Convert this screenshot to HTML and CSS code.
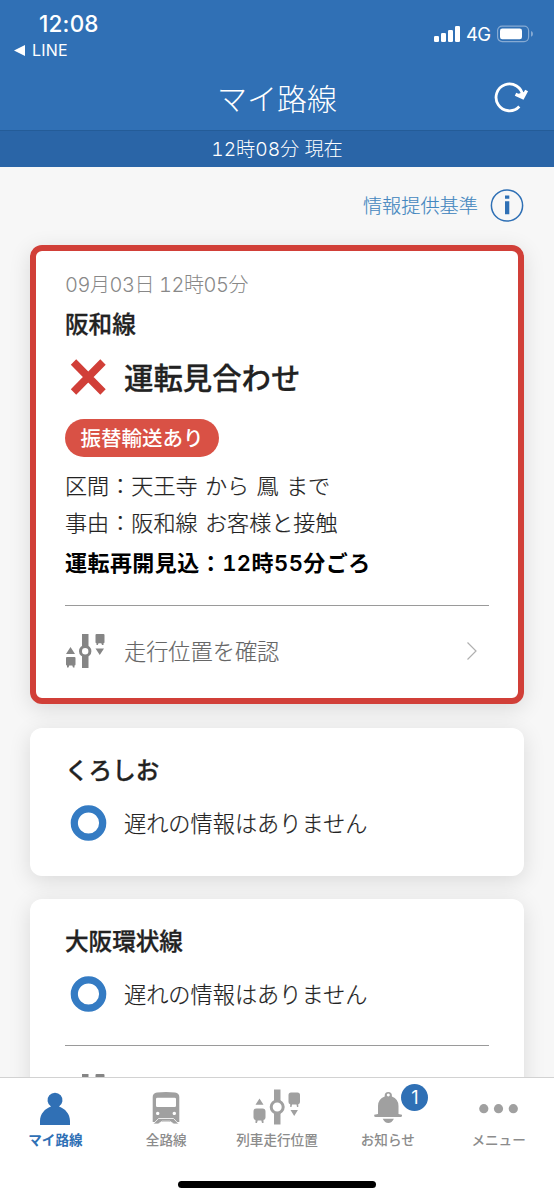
FILE: index.html
```
<!DOCTYPE html>
<html lang="ja">
<head>
<meta charset="utf-8">
<title>マイ路線</title>
<link rel="stylesheet" href="styles.css">
</head>
<body>
<svg class="defs" width="0" height="0">
  <symbol id="position" viewBox="0 0 40 34">
    <path d="M17 0h6.500v34H17z"/>
    <circle class="hub" cx="20.200" cy="17.200" r="4.700"/>
    <path d="M5.500 13l4.500 7H1zM30.500 14.500h8.500l-4.250 6.500z"/>
    <path d="M2 23h7.500q1 0 1 1v6.500q0 1-1 1v2H8l-.7-2H4.200l-.7 2H2v-2q-1 0-1-1V24q0-1 1-1zM31.500 0h7q1 0 1 1v7.300q0 1-1 1V11H37l-.7-1.700h-2.800L32.800 11h-1.300V9.300q-1 0-1-1V1q0-1 1-1z"/>
  </symbol>
</svg>
<header class="header">
  <div class="status-bar">
    <div class="clock-group">
      <div class="clock">12:08</div>
      <div class="back"><svg width="11" height="11" viewBox="0 0 11 11"><path d="M0 5.500L11 0v11z" fill="#fff"/></svg><span>LINE</span></div>
    </div>
    <div class="signal-group">
      <svg width="27" height="17" viewBox="0 0 27 17" fill="#fff"><rect x="0" y="10" width="5" height="6" rx="1.300"/><rect x="7" y="7" width="5" height="9" rx="1.300"/><rect x="14" y="4" width="5" height="12" rx="1.300"/><rect x="21" y="0" width="5" height="16" rx="1.300"/></svg>
      <span class="network">4G</span>
      <svg width="37" height="18" viewBox="0 0 37 18"><rect x=".6" y="1.100" width="31" height="15.500" rx="4.500" fill="none" stroke="#86aad3" stroke-width="1.200"/><rect x="3" y="3.500" width="22" height="10.700" rx="2.300" fill="#fff"/><path d="M34 6q2 .8 2 2.900T34 11.800z" fill="#86aad3"/></svg>
    </div>
  </div>
  <div class="nav-bar">
    <h1 class="title">マイ路線</h1>
    <svg class="reload" width="36" height="34" viewBox="0 0 36 34" fill="none" stroke="#fff" stroke-width="2.800"><path d="M26.300 26.500A13.400 13.400 0 1 1 29.800 16"/><path d="M22.500 14.200L29.800 17.500 33.600 10.500" stroke-width="3.300"/><path d="M25.500 14.300l4.300 2.200 2.300-4.300z" fill="#fff" stroke-width="1"/></svg>
  </div>
</header>
<div class="updated">12時08分 現在</div>
<main class="content">
  <div class="criteria"><span>情報提供基準</span>
    <svg width="34" height="34" viewBox="0 0 34 34"><circle cx="17" cy="16.500" r="15.600" fill="none" stroke="#2f70b5" stroke-width="1.500"/><path d="M15 6.500h4.300v3.300H15zM15 12.300h4.300v13H15z" fill="#2f70b5"/></svg>
  </div>
  <section class="card alert">
    <div class="date">09月03日 12時05分</div>
    <h2 class="line-name">阪和線</h2>
    <div class="state suspended">
      <svg width="46" height="36" viewBox="0 0 46 36"><path d="M8.500 3l29.500 30M38 3L8.500 33" stroke="#d13f38" stroke-width="7.600"/></svg>
      <span>運転見合わせ</span>
    </div>
    <div class="pill">振替輸送あり</div>
    <div class="detail">区間：天王寺 から 鳳 まで</div>
    <div class="detail">事由：阪和線 お客様と接触</div>
    <div class="resume">運転再開見込：12時55分ごろ</div>
    <div class="position-link">
      <svg class="position-icon" width="40" height="34"><use href="#position"/></svg>
      <span>走行位置を確認</span>
      <svg class="chevron" width="12" height="20" viewBox="0 0 12 20"><path d="M1.500 1.500l8.500 8.500-8.500 8.500" fill="none" stroke="#b0b0b0" stroke-width="1.200"/></svg>
    </div>
  </section>
  <section class="card">
    <h2 class="line-name">くろしお</h2>
    <div class="state">
      <svg width="46" height="36" viewBox="0 0 46 36"><circle cx="23.500" cy="18" r="14.200" fill="none" stroke="#347bc3" stroke-width="7.200"/></svg>
      <span>遅れの情報はありません</span>
    </div>
  </section>
  <section class="card">
    <h2 class="line-name">大阪環状線</h2>
    <div class="state">
      <svg width="46" height="36" viewBox="0 0 46 36"><circle cx="23.500" cy="18" r="14.200" fill="none" stroke="#347bc3" stroke-width="7.200"/></svg>
      <span>遅れの情報はありません</span>
    </div>
    <div class="position-link">
      <svg class="position-icon" width="40" height="34"><use href="#position"/></svg>
    </div>
  </section>
</main>
<nav class="tab-bar">
  <div class="tabs">
    <div class="tab active">
      <svg width="50" height="40" viewBox="0 0 50 40"><path d="M10 37V33C10 26 15 20.500 21 18.500A7.500 7.500 0 1 1 29 18.500C35 20.500 40 26 40 33V37z"/></svg>
      <span>マイ路線</span>
    </div>
    <div class="tab">
      <svg width="50" height="40" viewBox="0 0 50 40"><path fill-rule="evenodd" d="M16 4.500Q25 3.500 34 4.500Q38.300 5 38.300 9V34H11.700V9Q11.700 5 16 4.500zM15 11q0-1.300 1.300-1.300H33.700Q35 9.700 35 11v6.700q0 1.300-1.300 1.300H16.300Q15 19 15 17.700zM16.700 23.700a1.700 1.700 0 1 0 .01 0zM33.300 23.700a1.700 1.700 0 1 0 .01 0z"/><path d="M17.500 30.500h15l5.300 5.500h-5l-4-2.800h-7.600l-4 2.800h-5z" stroke="#fff" stroke-width=".8"/></svg>
      <span>全路線</span>
    </div>
    <div class="tab">
      <svg width="50" height="40" viewBox="0 0 50 40"><path d="M22 1.500h6.500v35H22z"/><circle class="hub" cx="25.200" cy="19" r="6"/><path d="M7.500 10.500l4 6.200h-8zM38.500 22h7.400l-3.700 6z"/><path d="M4.500 20.500h6q3 0 3 3v6q0 2-2 2.500V35h-1.500l-.7-2.500H5.700L5 35H3.500v-3q-2-.5-2-2.500v-6q0-3 3-3zM39 4.500h6.500q2.500 0 2.500 2.500v7q0 1.800-1.700 2.300V19H45l-.5-2.500h-4.500l-.5 2.500h-1.300v-2.700q-1.700-.5-1.700-2.300V7q0-2.500 2.500-2.500z"/></svg>
      <span>列車走行位置</span>
    </div>
    <div class="tab">
      <svg width="50" height="40" viewBox="0 0 50 40"><path fill-rule="evenodd" d="M21.700 8.500V7.500a3.600 3.600 0 1 1 7.200 0V8.500Q35.500 11 35.500 18v8l3.500.8q.5 2-1 2.200H12.500q-1.800 0-1.300-2.200l3.800-.8V18Q15 11 21.700 8.500zM25.300 5.600a1.500 1.500 0 1 0 .01 0zM19.700 30.800h11.200q-2 4.200-5.600 4.200t-5.600-4.200z"/></svg>
      <span>お知らせ</span>
      <b class="badge">1</b>
    </div>
    <div class="tab">
      <svg width="50" height="40" viewBox="0 0 50 40"><circle cx="9.800" cy="20.700" r="4.600"/><circle cx="24.500" cy="20.700" r="4.600"/><circle cx="39.300" cy="20.700" r="4.600"/></svg>
      <span>メニュー</span>
    </div>
  </div>
  <div class="home-indicator"></div>
</nav>
</body>
</html>
```
FILE: styles.css
```
* { box-sizing: border-box; }
body {
  margin: 0;
  height: 1200px;
  overflow: hidden;
  display: flex;
  flex-direction: column;
  background: #f7f7f7;
  color: #222;
  font-family: "Noto Sans CJK JP", sans-serif;
}
h1, h2 { margin: 0; }
svg { display: block; flex: none; }
.defs { position: absolute; }
.header { flex: none; height: 130px; background: #3070b5; color: #fff; }
.status-bar {
  height: 64px;
  display: flex;
  justify-content: space-between;
  padding: 9px 20px 0 14px;
  font-family: Inter, sans-serif;
}
.clock { height: 28px; line-height: 29px; padding-left: 25px; font-size: 22.500px; font-weight: 500; letter-spacing: .2px; }
.back { display: flex; align-items: center; height: 26px; gap: 7px; font-size: 16px; letter-spacing: .2px; }
.signal-group { display: flex; align-items: center; height: 50px; gap: 5px; }
.network { width: 26px; font-size: 18.500px; letter-spacing: -.8px; white-space: nowrap; }
.nav-bar {
  height: 66px;
  display: grid;
  grid-template-columns: 1fr auto 1fr;
  align-items: center;
  padding: 0 25px;
}
.title { grid-column: 2; font-size: 30px; font-weight: 300; line-height: 60px; }
.reload { justify-self: end; }
.updated {
  flex: none;
  height: 37px;
  border-top: 1px solid #245c98;
  background: #2a65a7;
  color: #fff;
  text-align: center;
  font: 300 19.200px/36px Inter, "Noto Sans CJK JP", sans-serif;
  font-feature-settings: "tnum";
}
.content { flex: 1; min-height: 0; overflow: hidden; padding: 0 30px; }
.criteria {
  height: 78px;
  display: flex;
  align-items: center;
  justify-content: flex-end;
  gap: 12px;
  color: #4487bf;
  font-size: 19.200px;
  font-weight: 300;
  -webkit-text-stroke: .15px;
}
.criteria span { margin-bottom: 2px; }
.card {
  margin-bottom: 23px;
  padding: 21px 35px 20px;
  border-radius: 12px;
  background: #fff;
  box-shadow: 0 5px 22px rgba(0, 0, 0, .12);
}
.alert { height: 459px; margin-bottom: 24px; padding: 14px 29px; border: 6px solid #d13f38; }
.date {
  height: 38px;
  color: #888;
  font: 300 20px/41px Inter, "Noto Sans CJK JP", sans-serif;
  font-feature-settings: "tnum";
  letter-spacing: -.45px;
}
.line-name { height: 40px; line-height: 41px; font-size: 23.600px; font-weight: 500; -webkit-text-stroke: .3px; }
.state { height: 67px; display: flex; align-items: center; gap: 13px; font-size: 22.200px; font-weight: 300; -webkit-text-stroke: .2px; }
.state span { margin-bottom: 2px; }
.suspended { height: 68px; font-size: 29.400px; font-weight: 500; -webkit-text-stroke: .3px; }
.pill {
  width: 154px;
  height: 38px;
  margin: 8px 0 11px;
  border-radius: 19px;
  background: #d95145;
  color: #fff;
  text-align: center;
  font-size: 20.500px;
  font-weight: 500;
  line-height: 36px;
}
.detail { height: 37px; line-height: 33px; font-size: 22.100px; font-weight: 300; word-spacing: 2.500px; -webkit-text-stroke: .2px; }
.resume {
  height: 63px;
  padding-top: 2px;
  color: #000;
  font: 600 22px/38px Inter, "Noto Sans CJK JP", sans-serif;
  font-feature-settings: "tnum";
  letter-spacing: .45px;
}
.position-link {
  height: 91px;
  display: flex;
  align-items: center;
  border-top: 1.500px solid #9a9a9a;
  color: #666;
  font-size: 22.200px;
  font-weight: 300;
  -webkit-text-stroke: .15px;
}
.card:not(.alert) .position-link { margin-top: 18px; }
.position-link span { margin: 0 0 3px 19px; }
.position-icon { fill: #858585; color: #858585; }
.hub { fill: #fff; stroke: currentColor; stroke-width: 3px; }
.chevron { margin-left: auto; margin-right: 11px; }
.tab-bar { position: relative; flex: none; height: 123px; border-top: 1px solid #d2d2d2; background: #fff; padding-top: 10px; }
.tabs { display: grid; grid-template-columns: repeat(5, 1fr); }
.tab {
  position: relative;
  height: 94px;
  display: flex;
  flex-direction: column;
  align-items: center;
  color: #8c8c8c;
  font-size: 13.600px;
  font-weight: 500;
  line-height: 22px;
}
.tab svg { fill: #a0a0a0; color: #a0a0a0; }
.tab.active { color: #2f70b5; font-weight: 700; }
.tab.active svg { fill: #3070b5; }
.badge {
  position: absolute;
  top: -4px;
  left: 69px;
  width: 27px;
  height: 27px;
  border-radius: 50%;
  background: #2f70b5;
  color: #fff;
  text-align: center;
  font: 400 18px/27px Inter, sans-serif;
}
.home-indicator { width: 198px; height: 7px; margin: -1px auto 0; border-radius: 4px; background: #000; }
```
